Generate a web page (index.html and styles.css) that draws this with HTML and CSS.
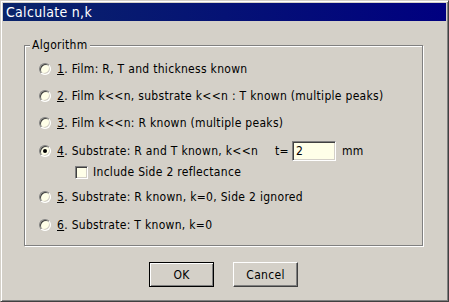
FILE: index.html
```html
<!DOCTYPE html>
<html lang="en">
<head>
  <meta charset="UTF-8">
  <title>Calculate n,k</title>
  <link rel="stylesheet" href="styles.css">
</head>
<body>

  <div class="window">
    <div class="titlebar">Calculate n,k</div>

    <div class="group">
      <span class="legend">Algorithm</span>

      <div class="row">
        <span class="radio"></span>
        <span class="label"><u>1</u>. Film: R, T and thickness known</span>
      </div>
      <div class="row">
        <span class="radio"></span>
        <span class="label"><u>2</u>. Film k&lt;&lt;n, substrate k&lt;&lt;n : T known (multiple peaks)</span>
      </div>
      <div class="row">
        <span class="radio"></span>
        <span class="label"><u>3</u>. Film k&lt;&lt;n: R known (multiple peaks)</span>
      </div>
      <div class="row row-4">
        <span class="radio checked"></span>
        <span class="label label-fixed"><u>4</u>. Substrate: R and T known, k&lt;&lt;n</span>
        <span class="t-label">t=</span>
        <span class="textbox">2</span>
        <span class="unit">mm</span>
      </div>
      <div class="row row-check">
        <span class="checkbox"></span>
        <span class="label">Include Side 2 reflectance</span>
      </div>
      <div class="row row-5">
        <span class="radio"></span>
        <span class="label"><u>5</u>. Substrate: R known, k=0, Side 2 ignored</span>
      </div>
      <div class="row row-6">
        <span class="radio"></span>
        <span class="label"><u>6</u>. Substrate: T known, k=0</span>
      </div>
    </div>

    <div class="buttons">
      <button class="btn btn-default">OK</button>
      <button class="btn">Cancel</button>
    </div>
  </div>

</body>
</html>
```

FILE: styles.css
```css
body {
  margin: 0;
  font-family: "DejaVu Sans", sans-serif;
  font-stretch: condensed;
  font-size: 12px;
  letter-spacing: 0.3px;
  color: #000;
}

.window {
  width: 449px;
  height: 302px;
  box-sizing: border-box;
  background-color: #d4d0c8;
  border: 1px solid;
  border-color: #d4d0c8 #404040 #404040 #d4d0c8;
  box-shadow: inset 1px 1px 0 #fff, inset -1px -1px 0 #808080;
  padding: 2px;
}

.titlebar {
  height: 18px;
  line-height: 18px;
  padding-left: 3px;
  background: linear-gradient(90deg, #0a246a, #000080);
  color: #fff;
  font-size: 14px;
}

/* etched group box */
.group {
  position: relative;
  width: 399px;
  height: 201px;
  box-sizing: border-box;
  margin: 24px 0 0 21px;
  padding: 13px 0 0 14px;
  border: 1px solid #808080;
  box-shadow: 1px 1px 0 #fff, inset 1px 1px 0 #fff;
}

.legend {
  position: absolute;
  top: -8px;
  left: 5px;
  padding: 0 2px;
  line-height: 14px;
  background-color: #d4d0c8;
}

.row {
  display: flex;
  align-items: center;
  height: 20px;
  margin-top: 7px;
}
.row:first-of-type {
  margin-top: 0;
}
.row-4 {
  margin-top: 8px;
}
.row-check {
  margin-top: 1px;
  padding-left: 36px;
}
.row-5 {
  margin-top: 5px;
}
.row-6 {
  margin-top: 8px;
}

.radio {
  position: relative;
  width: 12px;
  height: 12px;
  box-sizing: border-box;
  border-radius: 50%;
  border: 1px solid;
  border-color: #808080 #fff #fff #808080;
  box-shadow: inset 1px 1px 0 #404040, inset -1px -1px 0 #d4d0c8;
  background-color: #ffffe8;
  margin-right: 6px;
  flex-shrink: 0;
}
.radio.checked::after {
  content: "";
  position: absolute;
  left: 3px;
  top: 3px;
  width: 4px;
  height: 4px;
  border-radius: 50%;
  background-color: #000;
}

.checkbox {
  width: 13px;
  height: 13px;
  box-sizing: border-box;
  border: 1px solid;
  border-color: #808080 #fff #fff #808080;
  box-shadow: inset 1px 1px 0 #404040, inset -1px -1px 0 #d4d0c8;
  background-color: #ffffe8;
  margin-right: 5px;
  flex-shrink: 0;
}

.label {
  white-space: nowrap;
}
.label-fixed {
  width: 218px;
}

.t-label {
  width: 17px;
}

.textbox {
  width: 44px;
  height: 20px;
  box-sizing: border-box;
  padding: 2px 0 0 3px;
  border: 1px solid;
  border-color: #808080 #fff #fff #808080;
  box-shadow: inset 1px 1px 0 #404040, inset -1px -1px 0 #d4d0c8;
  background-color: #ffffe8;
  line-height: 14px;
}

.unit {
  margin-left: 6px;
}

.buttons {
  display: flex;
  gap: 19px;
  margin-top: 16px;
  padding-left: 146px;
}

.btn {
  width: 65px;
  height: 25px;
  padding: 0;
  font-family: inherit;
  font-stretch: condensed;
  font-size: 12px;
  letter-spacing: 0.3px;
  color: #000;
  background-color: #d4d0c8;
  border: 1px solid;
  border-color: #fff #404040 #404040 #fff;
  box-shadow: inset -1px -1px 0 #808080, inset 1px 1px 0 #d4d0c8;
}

.btn-default {
  border-color: #000;
  box-shadow: inset 1px 1px 0 #fff, inset -1px -1px 0 #808080;
}
```
